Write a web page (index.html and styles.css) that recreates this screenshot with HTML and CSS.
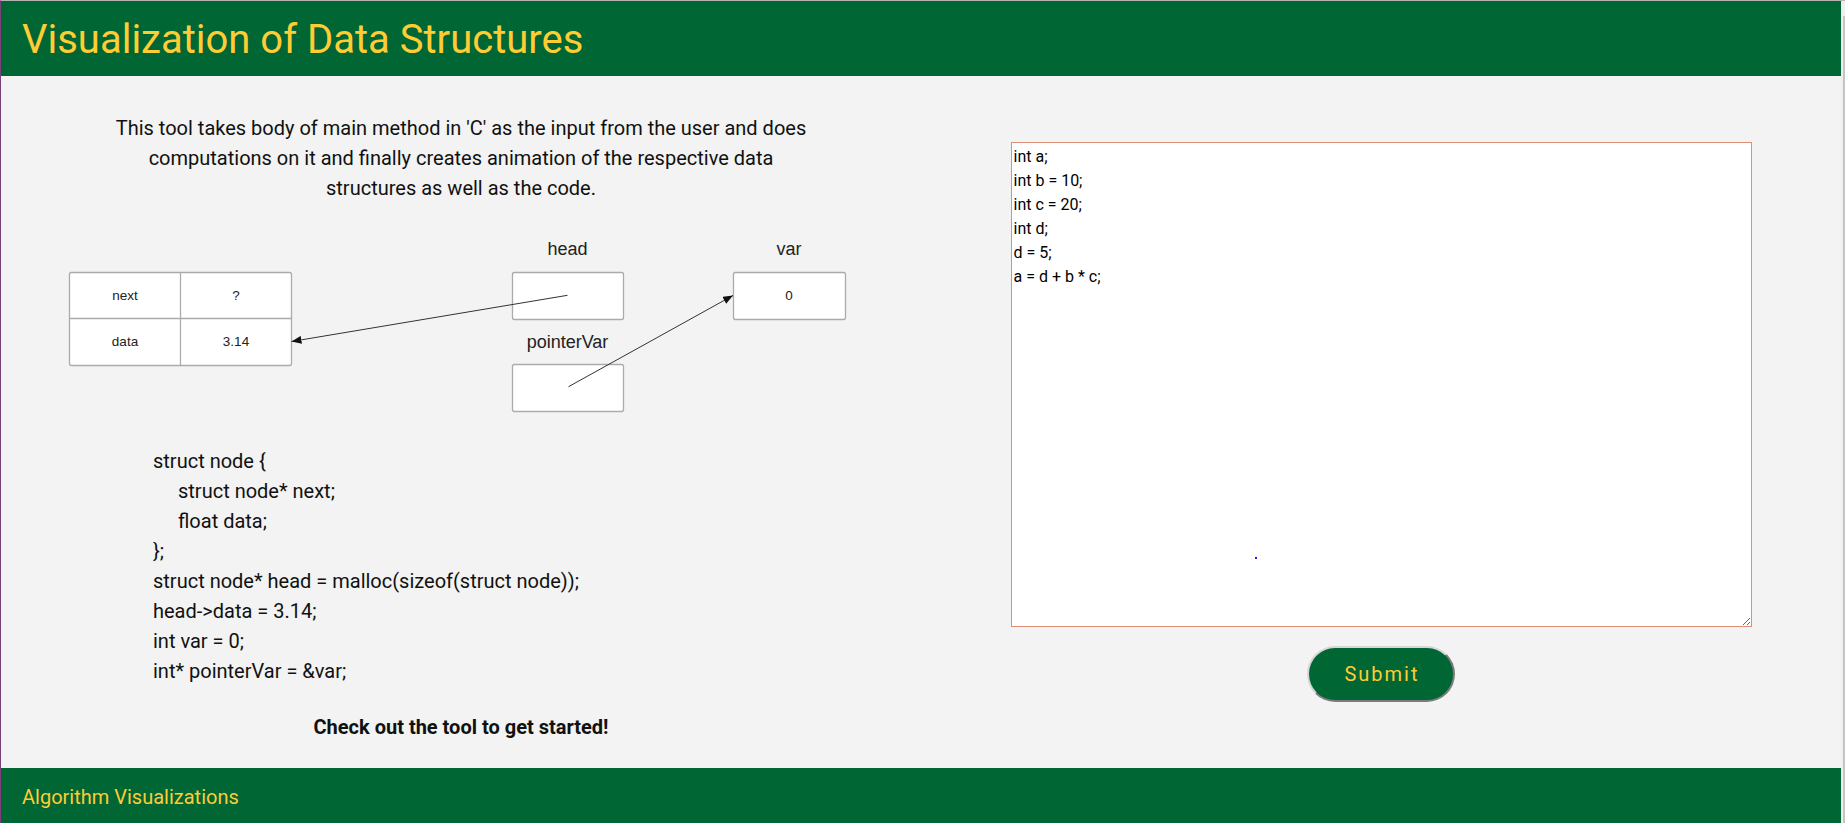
FILE: index.html
```html
<!DOCTYPE html>
<html lang="en">
<head>
<meta charset="utf-8">
<title>Visualization of Data Structures</title>
<link rel="stylesheet" href="styles.css">
</head>
<body>
<div class="page">
  <header class="topbar">
    <h1 class="title">Visualization of Data Structures</h1>
  </header>
  <main class="main">
    <section class="left">
      <p class="intro">This tool takes body of main method in 'C' as the input from the user and does computations on it and finally creates animation of the respective data structures as well as the code.</p>
      <svg class="diagram" width="920" height="220" viewBox="0 0 920 220" xmlns="http://www.w3.org/2000/svg">
        <defs>
          <marker id="arrow" viewBox="0 0 10 8" refX="10" refY="4" markerWidth="10" markerHeight="8" markerUnits="userSpaceOnUse" orient="auto">
            <path d="M0,0 L10,4 L0,8 Z" fill="#111"/>
          </marker>
        </defs>
        <rect class="box" x="68.5" y="69.5" width="222" height="93" rx="2"/>
        <line class="grid" x1="68.5" y1="115.5" x2="290.5" y2="115.5"/>
        <line class="grid" x1="179.5" y1="69.5" x2="179.5" y2="162.5"/>
        <text class="cell" x="124" y="97">next</text>
        <text class="cell" x="235" y="97">?</text>
        <text class="cell" x="124" y="143">data</text>
        <text class="cell" x="235" y="143">3.14</text>

        <text class="label" x="566.5" y="52">head</text>
        <rect class="box" x="511.5" y="69.5" width="111" height="47" rx="2"/>

        <text class="label" x="788" y="52">var</text>
        <rect class="box" x="732.5" y="69.5" width="112" height="47" rx="2"/>
        <text class="cell" x="788" y="97">0</text>

        <text class="label" x="566.5" y="145">pointerVar</text>
        <rect class="box" x="511.5" y="161.5" width="111" height="47" rx="2"/>

        <line class="ptr" x1="566.5" y1="92.3" x2="290.5" y2="138.5" marker-end="url(#arrow)"/>
        <line class="ptr" x1="567.5" y1="183.7" x2="732" y2="92.5" marker-end="url(#arrow)"/>
      </svg>
      <div class="code">
        <div class="code-line">struct node {</div>
        <div class="code-line indent">struct node* next;</div>
        <div class="code-line indent">float data;</div>
        <div class="code-line">};</div>
        <div class="code-line">struct node* head = malloc(sizeof(struct node));</div>
        <div class="code-line">head-&gt;data = 3.14;</div>
        <div class="code-line">int var = 0;</div>
        <div class="code-line">int* pointerVar = &amp;var;</div>
      </div>
      <p class="cta">Check out the tool to get started!</p>
    </section>
    <section class="right">
      <div class="editor-wrap">
        <textarea class="editor" spellcheck="false">int a;
int b = 10;
int c = 20;
int d;
d = 5;
a = d + b * c;</textarea>
        <span class="dot"></span>
      </div>
      <button class="submit" type="button">Submit</button>
    </section>
  </main>
  <footer class="bottombar">
    <span class="footer-text">Algorithm Visualizations</span>
  </footer>
</div>
<div class="edge"><div class="edge-bar"></div></div>
</body>
</html>
```
FILE: styles.css
```css
html, body {
  margin: 0;
  padding: 0;
  height: 100%;
}
html {
  background: #f2f3f2;
}
body {
  display: flex;
  flex-direction: row;
  border-top: 1px solid #b4b4b4;
  border-left: 1px solid #7b3f7c;
  box-sizing: border-box;
  overflow: hidden;
  font-family: Roboto, "Liberation Sans", sans-serif;
  color: #111;
}
.page {
  width: 1840px;
  display: flex;
  flex-direction: column;
  background: #f2f3f2;
}
.edge {
  width: 4px;
  background: #eef0ee;
}
.edge-bar {
  margin-top: 15px;
  margin-left: 2px;
  width: 2px;
  height: 100%;
  background: #c4c4c4;
}
.topbar {
  height: 75px;
  background: #006633;
  padding: 2px 0 0 21px;
  box-sizing: border-box;
}
.title {
  margin: 0;
  font-family: Roboto, sans-serif;
  font-weight: 400;
  font-size: 40px;
  line-height: 73px;
  color: #ffcc33;
}
.main {
  height: 692px;
  display: flex;
  flex-direction: row;
}
.left {
  width: 920px;
  display: flex;
  flex-direction: column;
}
.intro {
  margin: 37px auto 0;
  width: 705px;
  font-size: 20px;
  line-height: 30px;
  text-align: center;
  color: #111;
}
.diagram {
  display: block;
}
.box {
  fill: #fff;
  stroke: #ababab;
  stroke-width: 1.3;
}
.grid {
  stroke: #ababab;
  stroke-width: 1.3;
}
.cell {
  font-family: "Liberation Sans", Arial, sans-serif;
  font-size: 13.5px;
  fill: #222;
  text-anchor: middle;
}
.label {
  font-family: "Liberation Sans", Arial, sans-serif;
  font-size: 18px;
  fill: #222;
  text-anchor: middle;
}
.ptr {
  stroke: #333;
  stroke-width: 1;
}
.code {
  margin-top: 23px;
  padding-left: 152px;
  font-size: 20px;
  line-height: 30px;
  color: #111;
}
.indent {
  padding-left: 25px;
}
.cta {
  margin: 26px 0 0;
  text-align: center;
  font-size: 20px;
  line-height: 30px;
  font-weight: 700;
  color: #111;
}
.right {
  width: 920px;
  display: flex;
  flex-direction: column;
  align-items: center;
}
.editor-wrap {
  position: relative;
  margin-top: 66px;
  width: 741px;
  height: 485px;
}
.editor {
  display: block;
  width: 741px;
  height: 485px;
  box-sizing: border-box;
  margin: 0;
  padding: 2px;
  border: 1px solid #de8f76;
  background: #fff;
  font-family: Roboto, "Liberation Sans", sans-serif;
  font-size: 16px;
  line-height: 24px;
  color: #000;
  resize: both;
  outline: none;
}
.dot {
  position: absolute;
  left: 244px;
  top: 415px;
  width: 2px;
  height: 2px;
  background: #1a1aff;
}
.submit {
  margin-top: 19px;
  width: 148px;
  height: 56px;
  border-radius: 28px;
  border: 2px solid;
  border-color: #d6d6d6 #7c7c7c #7c7c7c #d6d6d6;
  background: #006633;
  color: #ffcc33;
  font-family: Roboto, sans-serif;
  font-size: 20px;
  letter-spacing: 2px;
  padding: 0 0 0 2px;
  cursor: pointer;
}
.bottombar {
  height: 55px;
  background: #006633;
  padding: 17px 0 0 21px;
  box-sizing: border-box;
}
.footer-text {
  font-family: Roboto, sans-serif;
  font-size: 20px;
  line-height: 24px;
  color: #ffcc33;
}
```
